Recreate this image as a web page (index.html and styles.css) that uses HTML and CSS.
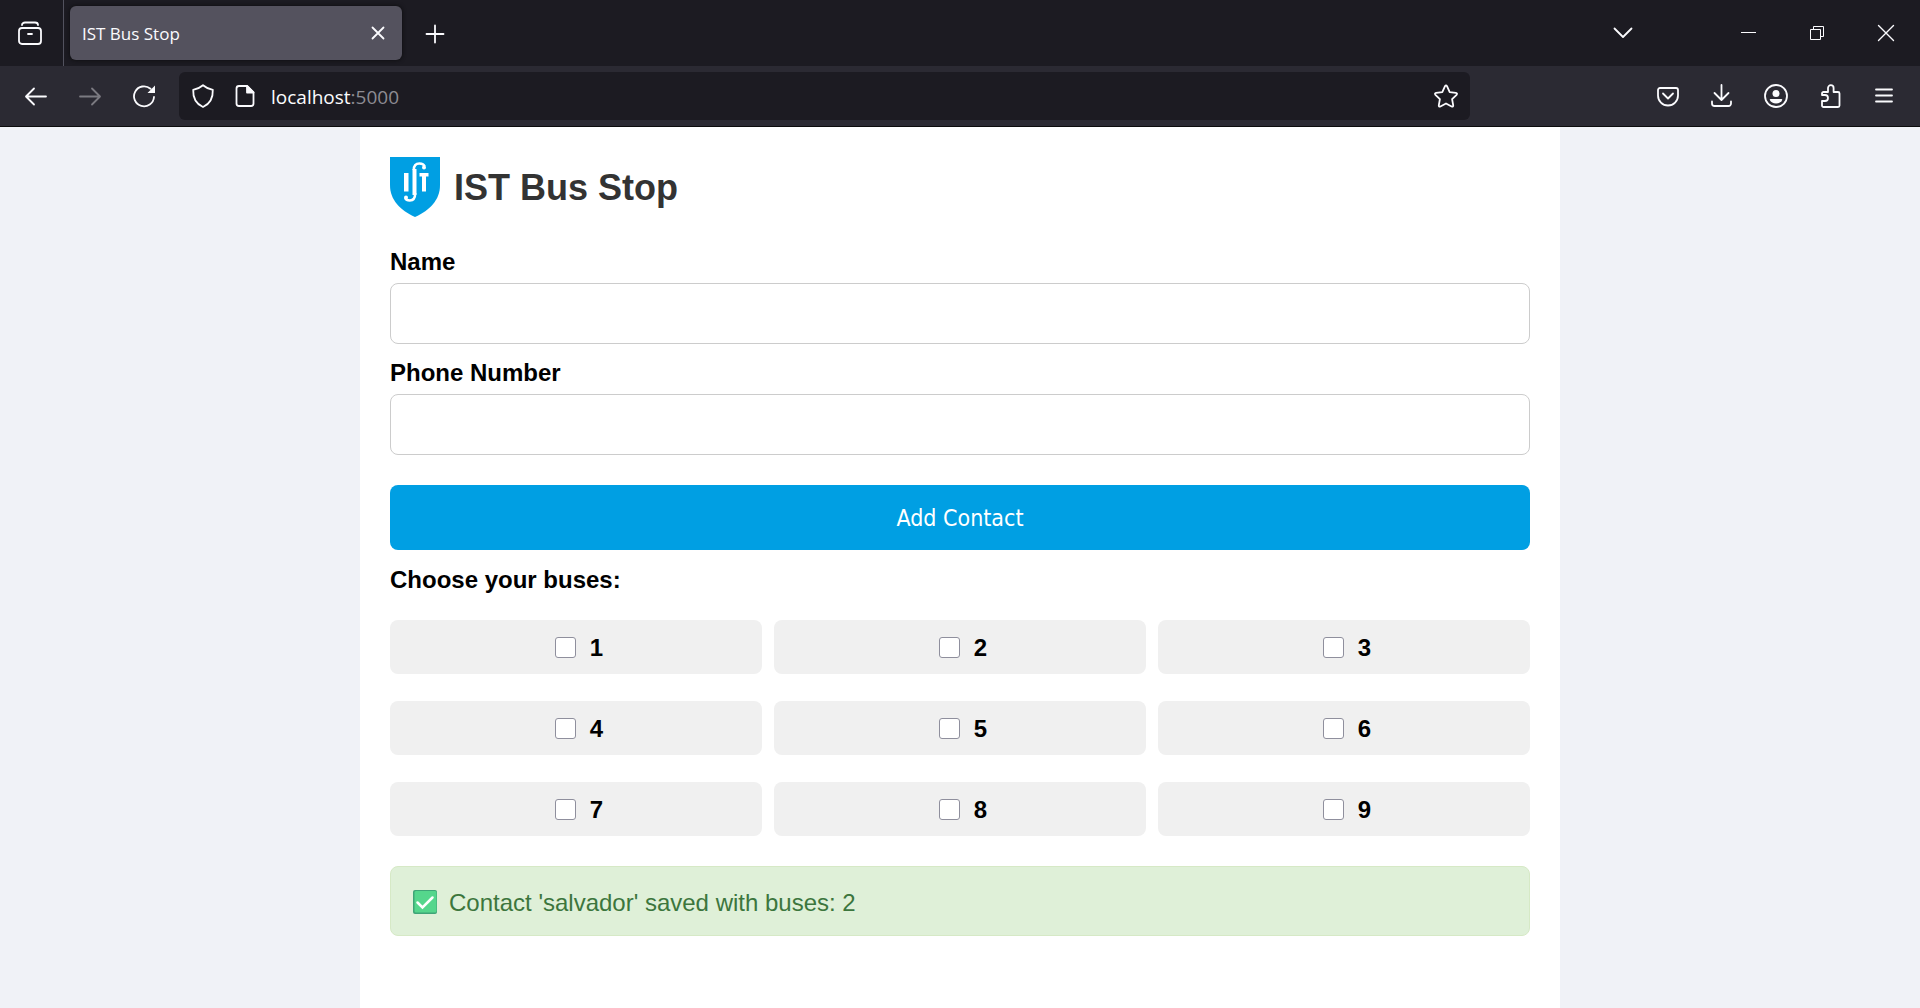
FILE: index.html
```html
<!DOCTYPE html>
<html lang="en">
<head>
  <meta charset="utf-8">
  <title>IST Bus Stop</title>
  <link rel="stylesheet" href="styles.css">
</head>
<body>
  <header class="browser">
    <div class="tabstrip">
      <button class="view-btn" type="button" aria-label="Firefox View">
        <svg class="icon" viewBox="0 0 24 24"><rect x="1" y="7" width="22" height="16" rx="3"/><path d="M4 4a3 2.500 0 0 1 3-2.500h10a3 2.500 0 0 1 3 2.500M10 13h4"/></svg>
      </button>
      <div class="tab">
        <span class="tab-title">IST Bus Stop</span>
        <button class="tab-close" type="button" aria-label="Close tab">
          <svg class="icon" viewBox="0 0 24 24"><path d="M6.500 6.500l11 11M17.500 6.500l-11 11"/></svg>
        </button>
      </div>
      <button class="tool-btn new-tab" type="button" aria-label="New tab">
        <svg class="icon" viewBox="0 0 24 24"><path d="M12 4.500v17M3.500 13h17"/></svg>
      </button>
      <button class="tool-btn all-tabs" type="button" aria-label="List all tabs">
        <svg class="icon" viewBox="0 0 24 24"><path d="M3.500 7.500l8.500 8.500 8.500-8.500"/></svg>
      </button>
      <button class="window-btn" type="button" aria-label="Minimize">
        <svg class="icon thin" viewBox="0 0 24 24"><path d="M5 11.500h15"/></svg>
      </button>
      <button class="window-btn" type="button" aria-label="Restore">
        <svg class="icon thin" viewBox="0 0 24 24"><path d="M5.500 8.500h10v10h-10zM8.500 8.500v-3h10v10h-3"/></svg>
      </button>
      <button class="window-btn" type="button" aria-label="Close">
        <svg class="icon cross" viewBox="0 0 24 24"><path d="M4.500 4.500l15 15M19.500 4.500l-15 15"/></svg>
      </button>
    </div>
    <div class="toolbar">
      <button class="tool-btn" type="button" aria-label="Back">
        <svg class="icon" viewBox="0 0 24 24"><path d="M2.500 12.500h19.500M10 4.500l-8 8 8 8"/></svg>
      </button>
      <button class="tool-btn" type="button" aria-label="Forward" disabled>
        <svg class="icon" viewBox="0 0 24 24"><path d="M2 12.500h19.500M14 4.500l8 8-8 8"/></svg>
      </button>
      <button class="tool-btn" type="button" aria-label="Reload">
        <svg class="icon" viewBox="0 0 24 24"><path d="M22 13a10 10 0 1 1-3.500-8.300"/><path class="disc" d="M23 1.500v7.500h-7.500z"/></svg>
      </button>
      <div class="urlbar">
        <button class="url-btn" type="button" aria-label="Tracking protection">
          <svg class="icon" viewBox="0 0 24 24"><path d="M12 1.200c-2.500 2.200-6 3.800-9.800 4.600-.3 7.200 1.800 13.700 9.800 17.200 8-3.500 10.100-10 9.800-17.200C18 5 14.500 3.400 12 1.200z"/></svg>
        </button>
        <button class="url-btn" type="button" aria-label="Site information">
          <svg class="icon" viewBox="0 0 24 24"><path d="M14 2H6a2.500 2.500 0 0 0-2.500 2.500v15A2.500 2.500 0 0 0 6 22h12a2.500 2.500 0 0 0 2.500-2.500V8.500z"/><path class="solid" d="M14 2v6.500h6.500z"/></svg>
        </button>
        <div class="url"><span class="host">localhost</span>:5000</div>
        <button class="url-btn" type="button" aria-label="Bookmark this page">
          <svg class="icon" viewBox="0 0 24 24"><path d="M11 2.200q1-1.800 2 0l2.700 5.900 6.200.8q1.800.4.700 1.900l-4.500 4.400 1.100 6.100q.1 1.900-1.600 1.200L12 19.500l-5.600 3q-1.700.7-1.600-1.200l1.100-6.100-4.500-4.400q-1.100-1.500.7-1.900l6.200-.8z"/></svg>
        </button>
      </div>
      <div class="spring"></div>
      <button class="tool-btn" type="button" aria-label="Save to Pocket">
        <svg class="icon" viewBox="0 0 24 24"><path d="M4 4h16a2 2 0 0 1 2 2v5.500a10 10 0 0 1-20 0V6a2 2 0 0 1 2-2zM7 9.500l5 5 5-5"/></svg>
      </button>
      <button class="tool-btn" type="button" aria-label="Downloads">
        <svg class="icon" viewBox="0 0 24 24"><path d="M11.500 1v14.500M4.500 9l7 7 7-7M2 17.500v2a2.500 2.500 0 0 0 2.500 2.500h14a2.500 2.500 0 0 0 2.500-2.500v-2"/></svg>
      </button>
      <button class="tool-btn" type="button" aria-label="Account">
        <svg class="icon" viewBox="0 0 24 24"><circle cx="12" cy="12" r="11"/><circle class="disc" cx="12" cy="9.500" r="3.500"/><path class="disc" d="M6.500 15h11q.9 0 .7 1c-1 2.200-3.400 3.500-6.200 3.500S6.800 18.200 5.800 16q-.2-1 .7-1z"/></svg>
      </button>
      <button class="tool-btn" type="button" aria-label="Extensions">
        <svg class="icon" viewBox="0 0 24 24"><path d="M4 11V9.500A1.500 1.500 0 0 1 5.500 8H10V4a2.800 2.800 0 0 1 5.600 0v4H20a1.500 1.500 0 0 1 1.500 1.500v12A1.500 1.500 0 0 1 20 23H5.500A1.500 1.500 0 0 1 4 21.500V17h3a3 3 0 0 0 0-6z"/></svg>
      </button>
      <button class="tool-btn" type="button" aria-label="Open menu">
        <svg class="icon" viewBox="0 0 24 24"><path d="M4 5.500h16M4 11.500h16M4 17.500h16"/></svg>
      </button>
    </div>
  </header>

  <main class="container">
    <div class="brand">
      <svg class="logo" viewBox="0 0 50 60" role="img" aria-label="IST logo">
        <path fill="#009fe3" d="M0 0h50v28c0 15-10 25-25 32C10 53 0 43 0 28z"/>
        <path fill="#fff" d="M14 16h4.500v18.500H14zM29.500 16h9v3.500H36v15h-4V19.500h-2.500z"/>
        <path fill="none" stroke="#fff" stroke-width="4" d="M24.500 38V12"/>
        <path fill="none" stroke="#fff" stroke-width="2.500" d="M23.800 13c0-4.500 2.200-6.500 5.600-6.500 2.600 0 4.600 1 5.300 3M25.200 36c0 5-2 7.500-5.400 7.500-2.500 0-4-1-4.600-2.500"/>
        <circle cx="34" cy="10.500" r="2" fill="#fff"/><circle cx="16" cy="40.500" r="2" fill="#fff"/>
      </svg>
      <h1 class="title">IST Bus Stop</h1>
    </div>

    <form class="form">
      <label class="label" for="name">Name</label>
      <input class="field" id="name" name="name" type="text">
      <label class="label" for="phone">Phone Number</label>
      <input class="field" id="phone" name="phone" type="tel">
      <button class="submit" type="button">Add Contact</button>

      <fieldset class="buses">
        <legend class="legend">Choose your buses:</legend>
        <div class="bus-grid">
          <label class="bus"><input class="check" type="checkbox" name="bus" value="1">1</label>
          <label class="bus"><input class="check" type="checkbox" name="bus" value="2">2</label>
          <label class="bus"><input class="check" type="checkbox" name="bus" value="3">3</label>
          <label class="bus"><input class="check" type="checkbox" name="bus" value="4">4</label>
          <label class="bus"><input class="check" type="checkbox" name="bus" value="5">5</label>
          <label class="bus"><input class="check" type="checkbox" name="bus" value="6">6</label>
          <label class="bus"><input class="check" type="checkbox" name="bus" value="7">7</label>
          <label class="bus"><input class="check" type="checkbox" name="bus" value="8">8</label>
          <label class="bus"><input class="check" type="checkbox" name="bus" value="9">9</label>
        </div>
      </fieldset>
    </form>

    <div class="alert" role="status">
      <svg class="alert-icon" viewBox="0 0 24 24" aria-hidden="true">
        <rect width="24" height="24" rx="2" fill="#3fa577"/>
        <rect x="1.500" y="1" width="22" height="21.500" rx="1.500" fill="#55d68c"/>
        <path d="M4.500 12.500l5 5L19.500 7.500" fill="none" stroke="#fff" stroke-width="2.500" stroke-linecap="round"/>
      </svg>
      <span>Contact 'salvador' saved with buses: 2</span>
    </div>
  </main>
</body>
</html>
```
FILE: styles.css
```css
* {
  box-sizing: border-box;
}

body {
  display: flex;
  flex-direction: column;
  min-height: 100vh;
  margin: 0;
  background: #f0f2f7;
  color: #000;
  font: 24px/27px "Liberation Sans", Arial, sans-serif;
}

button {
  padding: 0;
  border: 0;
  background: none;
  color: inherit;
}

/* Browser chrome */
.browser {
  border-bottom: 1px solid #0c0c0d;
  background: #2b2a33;
  color: #fbfbfe;
  font-family: "Open Sans", "Noto Sans", sans-serif;
}

.icon {
  display: block;
  width: 24px;
  height: 24px;
  fill: none;
  stroke: currentColor;
  stroke-width: 1.8;
  stroke-linecap: round;
  stroke-linejoin: round;
}

.thin {
  stroke-width: 1;
  stroke-linecap: butt;
  stroke-linejoin: miter;
}

.cross {
  stroke-width: 1.4;
}

.solid {
  fill: currentColor;
}

.disc {
  fill: currentColor;
  stroke: none;
}

.tabstrip,
.toolbar,
.urlbar,
.tab {
  display: flex;
  align-items: center;
}

.tabstrip {
  height: 66px;
  background: #1c1b22;
}

.view-btn,
.tool-btn,
.tab-close,
.window-btn,
.url-btn {
  display: flex;
  flex: none;
  align-items: center;
  justify-content: center;
  height: 48px;
}

.view-btn {
  width: 64px;
  height: 66px;
  padding-right: 3px;
  border-right: 1px solid #52525e;
}

.tool-btn {
  width: 54px;
}

.tool-btn:disabled {
  color: #7b7a81;
}

.tab {
  width: 332px;
  height: 54px;
  margin: 0 6px;
  padding: 0 6px 0 12px;
  border-radius: 6px;
  background: #54525e;
  box-shadow: 0 0 4px #0c0c0d;
}

.tab-title {
  flex: 1;
  font-size: 17px;
}

.tab-close {
  width: 36px;
}

.all-tabs {
  margin: 0 63px 0 auto;
}

.window-btn {
  width: 69px;
}

.toolbar {
  height: 60px;
  padding: 0 9px;
}

.urlbar {
  flex: 15;
  height: 48px;
  margin-left: 8px;
  padding: 0 3px;
  border-radius: 6px;
  background: #1c1b22;
}

.url-btn {
  width: 42px;
}

.url {
  flex: 1;
  padding: 2px 0 0 5px;
  color: #8d8c93;
  font-size: 19px;
}

.host {
  color: #fbfbfe;
}

.spring {
  flex: 2;
}

/* Page */
.container {
  flex: 1;
  width: 100%;
  max-width: 1200px;
  margin: 0 auto;
  padding: 30px;
  background: #fff;
}

.brand {
  display: flex;
  align-items: center;
  gap: 14px;
  margin-bottom: 31px;
}

.logo {
  width: 50px;
  height: 60px;
}

.title {
  margin: 0;
  padding-top: 2px;
  color: #333;
  font-size: 36px;
  line-height: 42px;
}

.label {
  display: block;
  margin-bottom: 8px;
  font-weight: bold;
}

.field {
  display: block;
  width: 100%;
  height: 61px;
  margin-bottom: 15px;
  padding: 15px;
  border: 1px solid #ccc;
  border-radius: 8px;
  font: inherit;
}

.submit {
  width: 100%;
  height: 65px;
  margin: 15px 0;
  border-radius: 8px;
  background: #009fe3;
  color: #fff;
  font: 23px/30px "DejaVu Sans Condensed", Tahoma, sans-serif;
}

.buses {
  min-width: 0;
  margin: 0;
  padding: 0;
  border: 0;
  font-weight: bold;
}

.legend {
  padding: 1px 0 0;
}

.bus-grid {
  display: grid;
  grid-template-columns: repeat(3, 1fr);
  gap: 27px 12px;
  margin: 27px 0 30px;
}

.bus {
  display: flex;
  align-items: center;
  justify-content: center;
  gap: 14px;
  height: 54px;
  border-radius: 8px;
  background: #f0f0f0;
}

.check {
  width: 21px;
  height: 21px;
  margin: 0 0 0 6px;
  border: 1px solid #8f8f9d;
  border-radius: 3px;
  background: #fff;
  appearance: none;
}

.check:checked {
  background: #009fe3;
}

.alert {
  display: flex;
  align-items: center;
  gap: 12px;
  min-height: 70px;
  padding: 2px 22px 0;
  border: 1px solid #d6e9c6;
  border-radius: 8px;
  background: #dff0d8;
  color: #3c763d;
}

.alert-icon {
  width: 24px;
  height: 24px;
}
```
